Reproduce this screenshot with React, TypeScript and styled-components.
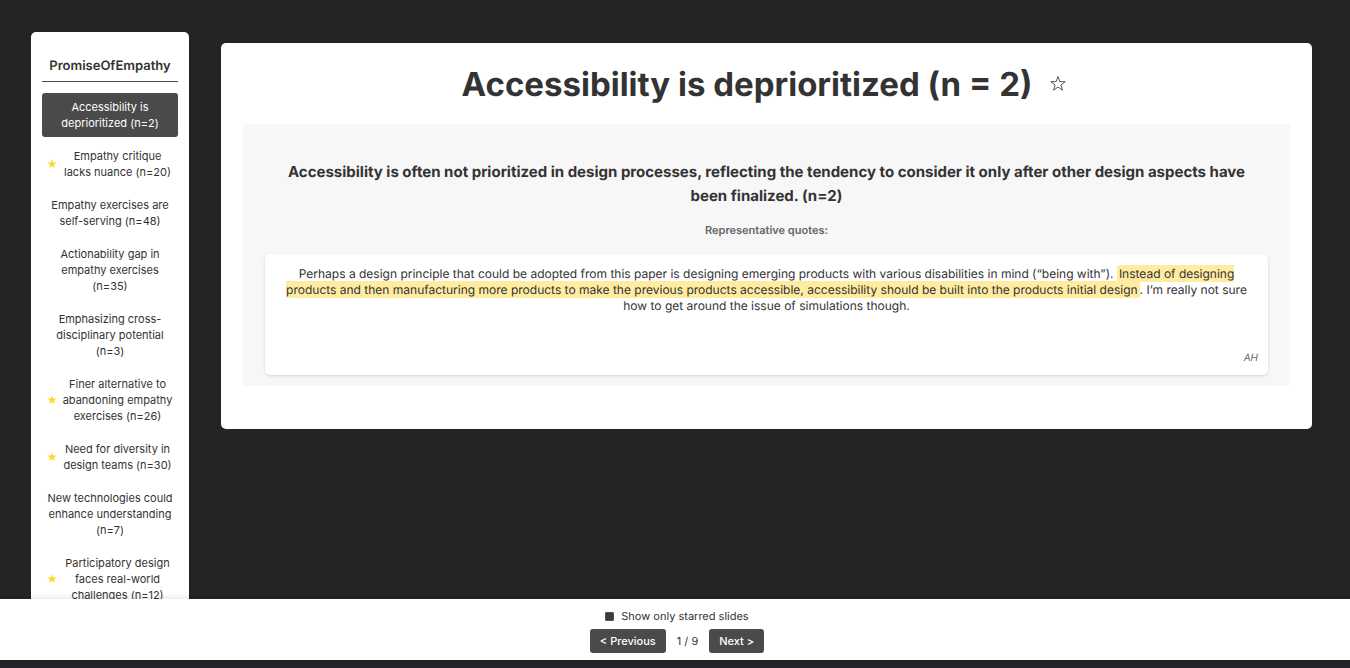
import React, { useState } from "react";
import styled, { createGlobalStyle } from "styled-components";

const GlobalStyle = createGlobalStyle`
  *, *::before, *::after { box-sizing: border-box; }
  body {
    margin: 0;
    background: #242424;
    color: #333333;
    font-family: Inter, "Liberation Sans", sans-serif;
    font-size: 11px;
    line-height: 16px;
    text-rendering: geometricPrecision;
    -webkit-font-smoothing: antialiased;
  }
`;

const Page = styled.div`
  display: flex;
  flex-direction: column;
  height: 100vh;
  padding-bottom: 8px;
  background: linear-gradient(#242424, #242424) top / 100% calc(100% - 8px) no-repeat #24222a;
`;

const Workspace = styled.div`
  flex: 1;
  min-height: 0;
  overflow: hidden;
  display: flex;
  align-items: flex-start;
  gap: 32px;
  padding: 32px 38px 0 31px;
`;

const Sidebar = styled.nav`
  flex: 0 0 158px;
  padding: 22px 11px;
  background: #ffffff;
  border-radius: 5px;
  text-align: center;
`;

const DeckTitle = styled.h2`
  margin: 0 0 11px;
  padding-bottom: 3px;
  border-bottom: 1px solid #4a4a4a;
  font-size: 13px;
  line-height: 24px;
  font-weight: 600;
`;

const SlideList = styled.ul`
  display: flex;
  flex-direction: column;
  gap: 5px;
  margin: 0;
  padding: 0;
  list-style: none;
`;

const SlideButton = styled.button<{ $active: boolean }>`
  display: flex;
  align-items: center;
  width: 100%;
  padding: 6px 5px;
  border: 0;
  border-radius: 3px;
  background: ${(p) => (p.$active ? "#4a4a4a" : "transparent")};
  color: ${(p) => (p.$active ? "#ffffff" : "#333333")};
  font: inherit;
  text-align: center;
  cursor: pointer;
`;

const SlideName = styled.span`
  flex: 1;
`;

const Star = styled.svg`
  flex: none;
  width: 10px;
  height: 10px;
  margin-right: 5px;
  fill: #ffd91f;
`;

const Slide = styled.main`
  flex: 1;
  min-width: 0;
  margin-top: 11px;
  padding: 22px 22px 43px;
  background: #ffffff;
  border-radius: 5px;
  text-align: center;
`;

const SlideHeader = styled.header`
  display: flex;
  align-items: center;
  justify-content: center;
  gap: 11px;
  margin-bottom: 20px;
`;

const SlideTitle = styled.h1`
  margin: 0;
  font-size: 33px;
  line-height: 39px;
  font-weight: 700;
`;

const StarToggle = styled.button`
  display: flex;
  padding: 6px 5px 8px 7px;
  border: 0;
  background: transparent;
  color: #555555;
  cursor: pointer;
`;

const OutlineStar = styled.svg`
  width: 16px;
  height: 16px;
  fill: none;
  stroke: currentColor;
`;

const Theme = styled.section`
  padding: 36px 22px 11px;
  background: #f7f7f7;
  border-radius: 3px;
`;

const ThemeTitle = styled.h3`
  margin: 0 0 14px;
  padding: 0 8px;
  font-size: 15px;
  line-height: 24px;
  font-weight: 700;
`;

const QuotesLabel = styled.h4`
  margin: 0 0 16px;
  color: #666666;
  font-size: 11px;
  line-height: 16px;
  font-weight: 600;
`;

const Quote = styled.figure`
  margin: 0;
  padding: 12px 10px 9px;
  background: #ffffff;
  border-radius: 5px;
  box-shadow: 0 1px 3px rgba(0, 0, 0, 0.14);
`;

const QuoteText = styled.blockquote`
  margin: 0 0 36px;
  font-size: 12px;
  line-height: 16px;
`;

const Highlight = styled.mark`
  padding: 1px 2px;
  border-radius: 2px;
  background: #ffeca1;
  color: inherit;
`;

const Author = styled.figcaption`
  color: #666666;
  font-size: 10px;
  font-style: italic;
  text-align: right;
`;

const Footer = styled.footer`
  position: relative;
  display: flex;
  flex-direction: column;
  align-items: center;
  gap: 5px;
  padding: 9px 8px 7px 12px;
  background: #ffffff;
  box-shadow: 0 -1px 6px rgba(0, 0, 0, 0.12);
`;

const FilterLabel = styled.label`
  display: flex;
  align-items: center;
  gap: 7px;
`;

const FilterBox = styled.input`
  appearance: none;
  width: 9px;
  height: 9px;
  margin: 0;
  border: 1px solid #555555;
  border-radius: 1px;
  background: #3b3b3b;
  &:checked { background: #ffd91f; }
`;

const Pager = styled.div`
  display: flex;
  align-items: center;
  gap: 11px;
`;

const PagerButton = styled.button`
  padding: 4px 10px;
  border: 0;
  border-radius: 3px;
  background: #4a4a4a;
  color: #ffffff;
  font: inherit;
  font-weight: 500;
  cursor: pointer;
`;

const PageCount = styled.span`
  font-weight: 400;
`;

const slides = [
  { name: "Accessibility is deprioritized (n=2)", starred: false },
  { name: "Empathy critique lacks nuance (n=20)", starred: true },
  { name: "Empathy exercises are self-serving (n=48)", starred: false },
  { name: "Actionability gap in empathy exercises (n=35)", starred: false },
  { name: "Emphasizing cross-disciplinary potential (n=3)", starred: false },
  { name: "Finer alternative to abandoning empathy exercises (n=26)", starred: true },
  { name: "Need for diversity in design teams (n=30)", starred: true },
  { name: "New technologies could enhance understanding (n=7)", starred: false },
  { name: "Participatory design faces real-world challenges (n=12)", starred: true },
];

const starPoints = "8,0.5 9.8,5.6 15.2,5.7 10.9,9 12.5,14.2 8,11.1 3.5,14.2 5.1,9 0.8,5.7 6.2,5.6";

export default function App() {
  const [onlyStarred, setOnlyStarred] = useState(false);
  const shown = slides.filter((s) => !onlyStarred || s.starred);
  return (
    <>
      <GlobalStyle />
      <Page>
        <Workspace>
          <Sidebar aria-label="Slides">
            <DeckTitle>PromiseOfEmpathy</DeckTitle>
            <SlideList>
              {shown.map((slide) => (
                <li key={slide.name}>
                  <SlideButton type="button" $active={slide === slides[0]}>
                    {slide.starred && (
                      <Star viewBox="0 0 16 16" aria-hidden="true">
                        <polygon points={starPoints} />
                      </Star>
                    )}
                    <SlideName>{slide.name}</SlideName>
                  </SlideButton>
                </li>
              ))}
            </SlideList>
          </Sidebar>
          <Slide>
            <SlideHeader>
              <SlideTitle>Accessibility is deprioritized (n = 2)</SlideTitle>
              <StarToggle type="button" aria-label="Star this slide">
                <OutlineStar viewBox="0 0 16 16" aria-hidden="true">
                  <polygon points={starPoints} />
                </OutlineStar>
              </StarToggle>
            </SlideHeader>
            <Theme>
              <ThemeTitle>
                Accessibility is often not prioritized in design processes, reflecting the tendency to
                consider it only after other design aspects have been finalized. (n=2)
              </ThemeTitle>
              <QuotesLabel>Representative quotes:</QuotesLabel>
              <Quote>
                <QuoteText>
                  Perhaps a design principle that could be adopted from this paper is designing emerging
                  products with various disabilities in mind (“being with”).{" "}
                  <Highlight>
                    Instead of designing products and then manufacturing more products to make the
                    previous products accessible, accessibility should be built into the products
                    initial design
                  </Highlight>
                  . I’m really not sure how to get around the issue of simulations though.
                </QuoteText>
                <Author>AH</Author>
              </Quote>
            </Theme>
          </Slide>
        </Workspace>
        <Footer>
          <FilterLabel>
            <FilterBox
              type="checkbox"
              checked={onlyStarred}
              onChange={(e) => setOnlyStarred(e.target.checked)}
            />
            Show only starred slides
          </FilterLabel>
          <Pager>
            <PagerButton type="button">&lt; Previous</PagerButton>
            <PageCount>1 / 9</PageCount>
            <PagerButton type="button">Next &gt;</PagerButton>
          </Pager>
        </Footer>
      </Page>
    </>
  );
}
